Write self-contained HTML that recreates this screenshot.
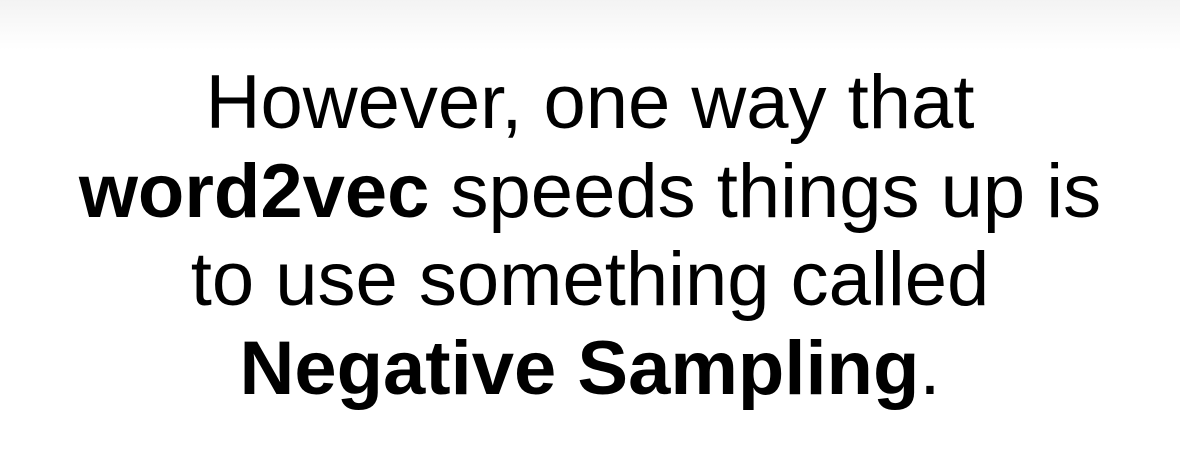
<!DOCTYPE html>
<html><head><style>
html,body{margin:0;padding:0;}
body{width:1180px;height:456px;overflow:hidden;background:#fff;position:relative;font-family:"Liberation Sans",Arial,sans-serif;}
.top{position:absolute;left:0;top:0;width:1180px;height:50px;background:linear-gradient(#f3f3f3,#fff);}
.t{position:absolute;left:0;top:59px;width:1180px;text-align:center;font-size:76px;line-height:88.5px;color:#000;}
b{font-weight:bold;}
</style></head><body>
<div class="top"></div>
<div class="t">However, one way that<br><b>word2vec</b> speeds things up is<br>to use something called<br><b>Negative Sampling</b>.</div>
</body></html>
